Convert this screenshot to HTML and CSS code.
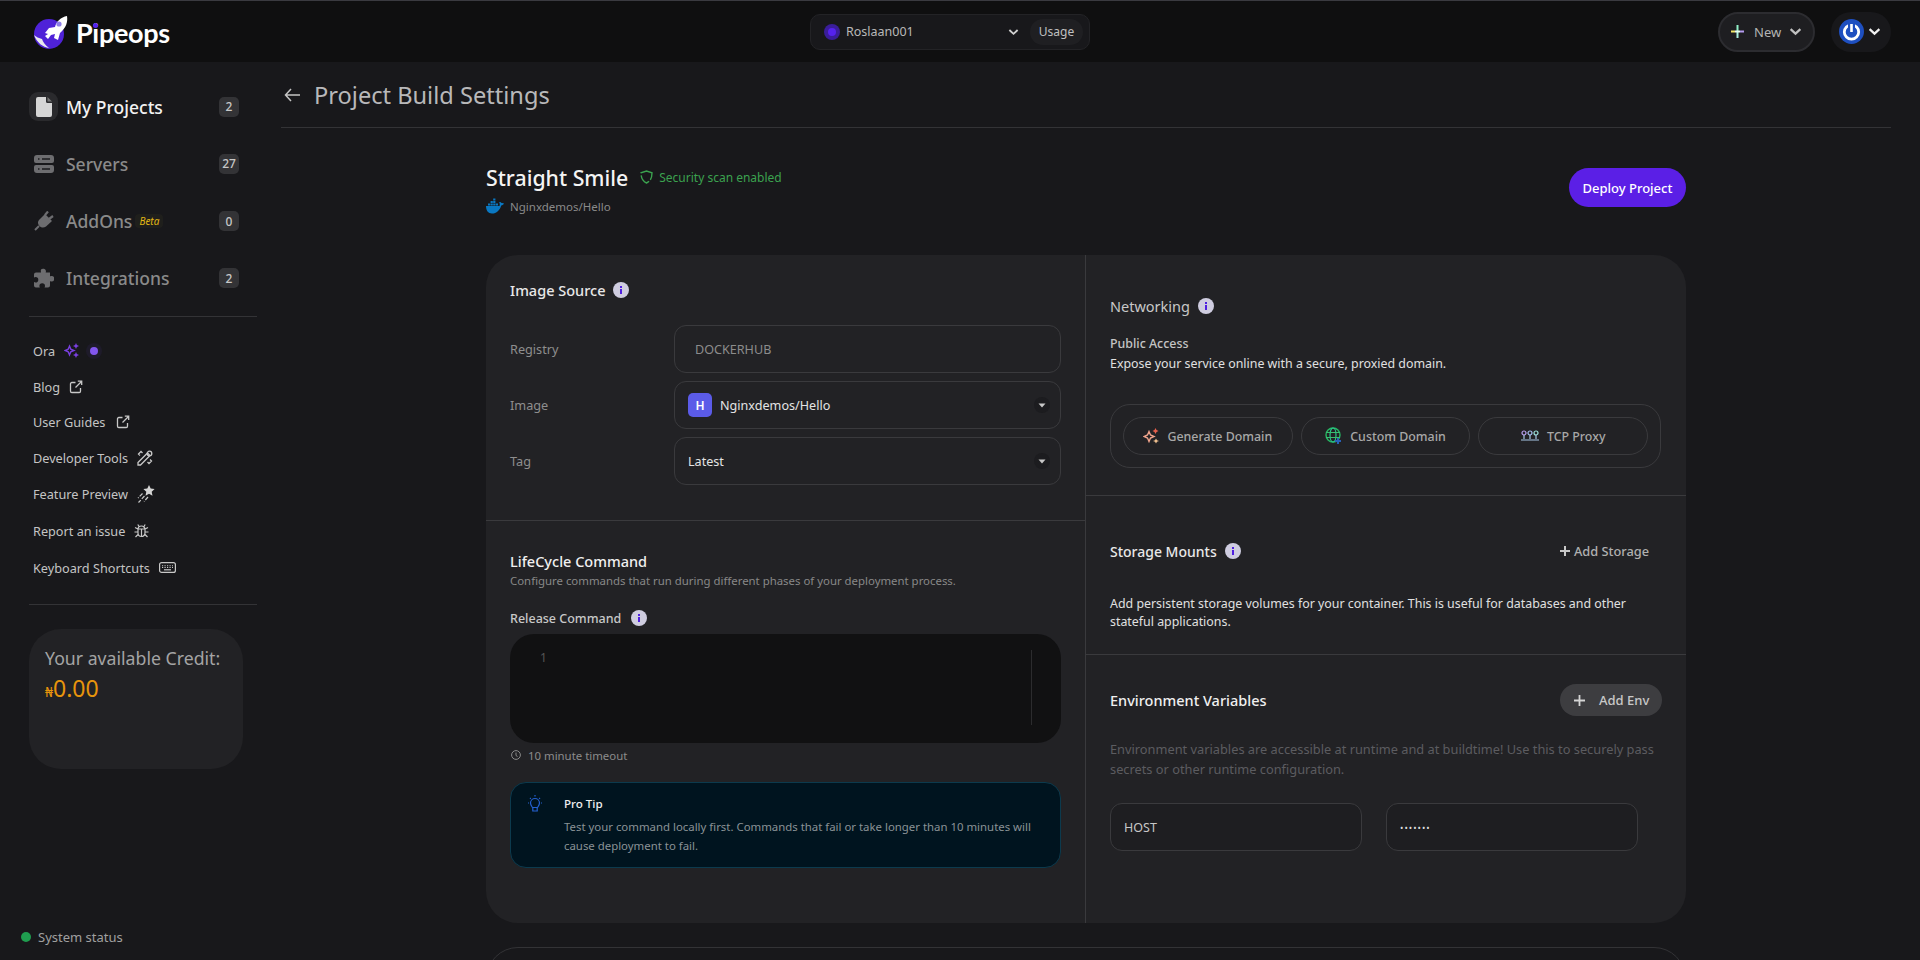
FILE: index.html
```html
<!DOCTYPE html>
<html lang="en">
<head>
<meta charset="utf-8">
<title>Project Build Settings - Pipeops</title>
<link rel="stylesheet" href="styles.css">
</head>
<body>
<svg class="defs" width="0" height="0" aria-hidden="true">
  <symbol id="info" viewBox="0 0 16 16"><circle cx="8" cy="8" r="8" fill="#cfcde0"/><rect x="7" y="7" width="2" height="5" fill="#4f1fe0"/><rect x="7" y="4" width="2" height="2" fill="#4f1fe0"/></symbol>
  <symbol id="ext" viewBox="0 0 14 14"><path d="M6.500 2.500H2.800A1.300 1.300 0 0 0 1.500 3.800v7.400a1.300 1.300 0 0 0 1.300 1.300h7.400a1.300 1.300 0 0 0 1.300-1.300V8M6.500 7.500l6-6M8.800 1.200h3.900v3.900" fill="none" stroke="#c8c8c8" stroke-width="1.300"/></symbol>
  <symbol id="chev" viewBox="0 0 12 8"><path d="M1.500 1.800 6 6l4.500-4.200" fill="none" stroke="currentColor" stroke-width="2"/></symbol>
  <symbol id="caret" viewBox="0 0 8 5"><path d="M.5.500h7L4 4.500z" fill="#c8c8c8"/></symbol>
</svg>

<header class="topbar">
  <a class="brand">
    <svg class="brand-mark" viewBox="0 0 36 34" width="36" height="34">
      <circle cx="16" cy="19" r="15" fill="#4f22d8"/>
      <path d="M1 20c3 8 9 12 15 13-4-3-6-6-7-9-3-1-6-2-8-4z" fill="#e8e8ee"/>
      <path d="M34 1c1 6-1 12-7 17l-2 7-4-2 1-4-4 1-3 4-3-3 3-2-3-1 4-5 6-1C23 7 28 2 34 1z" fill="#fff"/>
      <circle cx="26" cy="9" r="2.600" fill="#8e7ee8"/>
    </svg>
    <span class="brand-name">Pipeops<span class="brand-dot"></span></span>
  </a>
  <div class="org">
    <span class="org-dot"></span>
    <span class="org-name">Roslaan001</span>
    <svg class="org-chev" width="11" height="8"><use href="#chev"/></svg>
    <span class="usage">Usage</span>
  </div>
  <div class="top-actions">
    <button class="new-btn">
      <svg width="13" height="13" viewBox="0 0 13 13"><rect x="0" y="5.500" width="4" height="2" fill="#f2e66a"/><rect x="9" y="5.500" width="4" height="2" fill="#b59cf0"/><rect x="5.500" y="0" width="2" height="6" fill="#8ff0c8"/><rect x="5.500" y="7" width="2" height="6" fill="#a8f0e0"/><rect x="4" y="5.500" width="5" height="2" fill="#e8fff0"/></svg>
      <span>New</span>
      <svg class="new-chev" width="13" height="9"><use href="#chev"/></svg>
    </button>
    <div class="avatar-pill">
      <svg width="25" height="25" viewBox="0 0 25 25"><circle cx="12.500" cy="12.500" r="12.500" fill="#1e4fc0"/><circle cx="12.500" cy="13" r="7.200" fill="none" stroke="#fff" stroke-width="2.800"/><rect x="9" y="3" width="7" height="6" fill="#1e4fc0"/><rect x="11.200" y="5" width="2.600" height="8" fill="#fff"/></svg>
      <svg class="avatar-chev" width="13" height="9"><use href="#chev"/></svg>
    </div>
  </div>
</header>

<div class="shell">
  <aside class="sidebar">
    <nav class="nav">
      <a class="nav-item active">
        <span class="nav-icon boxed"><svg width="16" height="20" viewBox="0 0 16 20"><path d="M2 0h8v4.500A1.500 1.500 0 0 0 11.500 6H16v12a2 2 0 0 1-2 2H2a2 2 0 0 1-2-2V2a2 2 0 0 1 2-2z" fill="#d6d6d6"/><path d="M11.500 0 16 4.500h-4.500z" fill="#777"/></svg></span>
        <span class="nav-label">My Projects</span>
        <span class="count">2</span>
      </a>
      <a class="nav-item">
        <span class="nav-icon"><svg width="20" height="18" viewBox="0 0 20 18"><path d="M3 0h14a3 3 0 0 1 3 3v3a2 2 0 0 1-2 2H2A2 2 0 0 1 0 6V3a3 3 0 0 1 3-3zM2 10h16a2 2 0 0 1 2 2v3a3 3 0 0 1-3 3H3a3 3 0 0 1-3-3v-3a2 2 0 0 1 2-2z" fill="#6d6d70"/><path d="M4 3.200h1.500v1.600H4zM8 3.200h8v1.600H8zM4 13.200h1.500v1.600H4zM8 13.200h8v1.600H8z" fill="#1b1b1e"/></svg></span>
        <span class="nav-label">Servers</span>
        <span class="count">27</span>
      </a>
      <a class="nav-item">
        <span class="nav-icon"><svg width="20" height="20" viewBox="0 0 20 20"><path d="M1 19l4-4" stroke="#6d6d70" stroke-width="2"/><path d="M5 9l6-6 7 7-6 5.500c-2 1.500-4.500 1.500-6.500-.5S3.500 11 5 9z" fill="#6d6d70"/><path d="M11 4l3-3.500M15 8l4-3" stroke="#6d6d70" stroke-width="2.200"/></svg></span>
        <span class="nav-label">AddOns</span>
        <span class="beta">Beta</span>
        <span class="count">0</span>
      </a>
      <a class="nav-item">
        <span class="nav-icon"><svg width="21" height="20" viewBox="0 0 21 20"><path d="M8 1.500a3 3 0 0 1 5 1.500c0 .7-.3 1-.3 1.500H17v4c.6-.4 1-.5 1.500-.5a2.800 2.800 0 0 1 0 5.600c-.5 0-1-.1-1.500-.5v4.400a2 2 0 0 1-2 2h-3.500c.3-.5.5-1 .5-1.500a2.800 2.800 0 0 0-5.600 0c0 .5.2 1 .5 1.500H3a2 2 0 0 1-2-2v-3.500c.5.300 1 .5 1.500.5a2.800 2.800 0 0 0 0-5.600c-.5 0-1 .2-1.500.5V6.500a2 2 0 0 1 2-2h5c0-.5-.5-1.500 0-3z" fill="#6d6d70"/></svg></span>
        <span class="nav-label">Integrations</span>
        <span class="count">2</span>
      </a>
    </nav>
    <ul class="links">
      <li class="link link-ora">Ora
        <svg width="15" height="15" viewBox="0 0 15 15"><path d="M5.500 3 6.800 6.200 10 7.500 6.800 8.800 5.500 12 4.200 8.800 1 7.500 4.200 6.200z" fill="none" stroke="#7a3fe0" stroke-width="1.400"/><path d="M12 0l.9 2.100L15 3l-2.100.9L12 6l-.9-2.100L9 3l2.100-.9zM12 9l.9 2.100 2.100.9-2.100.9L12 15l-.9-2.100L9 12l2.100-.9z" fill="#7a3fe0"/></svg>
        <span class="ora-dot"></span>
      </li>
      <li class="link link-blog">Blog <svg width="14" height="14"><use href="#ext"/></svg></li>
      <li class="link link-guides">User Guides <svg width="14" height="14"><use href="#ext"/></svg></li>
      <li class="link link-dev">Developer Tools
        <svg width="16" height="16" viewBox="0 0 16 16" fill="none" stroke="#c8c8c8" stroke-width="1.300"><path d="M1 12.500 10.500 3l2.500 2.500L3.500 15 1 15zM3 5.500 1.500 4 4 1.500 5.500 3M10.500 12l1.500 1.500L14.500 11 13 9.500"/><circle cx="12.500" cy="3.500" r="2.300"/></svg>
      </li>
      <li class="link link-feat">Feature Preview
        <svg width="18" height="18" viewBox="0 0 18 18"><path d="M12 0l1.700 3.600 3.900.5-2.900 2.700.8 3.900L12 8.800l-3.500 1.900.8-3.900L6.400 4.100l3.900-.5z" fill="#d4d4d4"/><path d="M5.500 8.500 1 13M7.500 11 1.500 17.500M11 12l-4 4.500" fill="none" stroke="#c8c8c8" stroke-width="1.200" stroke-dasharray="4 1.500"/></svg>
      </li>
      <li class="link link-bug">Report an issue
        <svg width="15" height="15" viewBox="0 0 15 15" fill="none" stroke="#c8c8c8" stroke-width="1.200"><path d="M4 6.500a3.500 3.500 0 0 1 7 0V10a3.500 3.500 0 0 1-7 0zM5 3.500 3.800 1.500M10 3.500l1.200-2M4 6 1 4.500M11 6l3-1.500M4 9H.5M11 9h3.500M4 11.500 1.500 14M11 11.500l2.500 2.500M7.500 6.500v7.500M4.500 6h6"/></svg>
      </li>
      <li class="link link-keys">Keyboard Shortcuts
        <svg width="17" height="11" viewBox="0 0 17 11" fill="none" stroke="#c8c8c8"><rect x=".6" y=".6" width="15.800" height="9.800" rx="2" stroke-width="1.200"/><path d="M3 3.700h11M3 5.500h11" stroke-width="1.100" stroke-dasharray="1.200 1.300"/><path d="M5 7.800h7" stroke-width="1.200"/></svg>
      </li>
    </ul>
    <div class="credit">
      <p class="credit-label">Your available Credit:</p>
      <p class="credit-value"><span class="naira">₦</span>0.00</p>
    </div>
    <div class="status"><span class="status-dot"></span>System status</div>
  </aside>

  <main class="main">
    <div class="page-head">
      <svg width="16" height="14" viewBox="0 0 16 14"><path d="M7 1 1.500 7 7 13M2 7h14" fill="none" stroke="#c4c4c4" stroke-width="1.500"/></svg>
      <h1>Project Build Settings</h1>
    </div>

    <div class="content">
      <div class="project-head">
        <div>
          <div class="project-title">
            <h2>Straight Smile</h2>
            <svg width="13" height="14" viewBox="0 0 13 14"><path d="M6.500 1 12 2.800c0 5-1.500 8.300-5.500 10.200C2.500 11.100 1 7.800 1 2.800z" fill="none" stroke="#3ba24f" stroke-width="1.400" stroke-dasharray="13 2"/></svg>
            <span class="scan">Security scan enabled</span>
          </div>
          <div class="project-source">
            <svg width="18" height="16" viewBox="0 0 18 16"><path d="M0 8h13.500c.5-1.500.3-2.800-.4-3.800 1-.6 1.800-.2 2.400.8 1-.2 2 0 2.500.6-.5 1.200-1.500 1.800-2.800 1.800C14 12 10.500 15.500 6 15.500 2 15.500 0 12.500 0 8z" fill="#0a78c2"/><path d="M2 5.500h2.200v2H2zM4.600 5.500h2.200v2H4.600zM7.200 5.500h2.200v2H7.200zM9.800 5.500H12v2H9.800zM4.600 3h2.200v2H4.600zM7.200 3h2.200v2H7.200zM7.200.5h2.200v2H7.200z" fill="#0a78c2"/></svg>
            <span>Nginxdemos/Hello</span>
          </div>
        </div>
        <button class="deploy">Deploy Project</button>
      </div>

      <section class="card">
        <div class="col col-left">
          <div class="sec sec-source">
            <h3 class="sec-title">Image Source <svg width="16" height="16"><use href="#info"/></svg></h3>
            <div class="form-row">
              <span class="form-label">Registry</span>
              <div class="field field-muted">DOCKERHUB</div>
            </div>
            <div class="form-row">
              <span class="form-label">Image</span>
              <div class="field field-select"><span class="img-badge">H</span>Nginxdemos/Hello<span class="caret-wrap"><svg width="8" height="5"><use href="#caret"/></svg></span></div>
            </div>
            <div class="form-row">
              <span class="form-label">Tag</span>
              <div class="field field-select">Latest<span class="caret-wrap"><svg width="8" height="5"><use href="#caret"/></svg></span></div>
            </div>
          </div>
          <div class="sec sec-life">
            <h3 class="sec-title sec-title-plain">LifeCycle Command</h3>
            <p class="sec-sub">Configure commands that run during different phases of your deployment process.</p>
            <h4 class="release">Release Command <svg width="16" height="16"><use href="#info"/></svg></h4>
            <div class="editor"><span class="line-no">1</span><span class="scroll-line"></span></div>
            <div class="timeout">
              <svg width="10" height="10" viewBox="0 0 10 10" fill="none" stroke="#8a8a8a"><circle cx="5" cy="5" r="4.400"/><path d="M5 2.500V5.500L6.500 6.500"/></svg>
              10 minute timeout
            </div>
            <div class="tip">
              <svg class="tip-icon" width="16" height="18" viewBox="0 0 16 18" fill="none" stroke="#2460d0" stroke-width="1.200"><path d="M5.500 12.500C4.500 11 3.500 10 3.500 8a4.500 4.500 0 0 1 9 0c0 2-1 3-2 4.500zM5.800 12.500v3.500h4.400v-3.500M8 0v1.500M1 8h1M14 8h1M3 3l.8.800M13 3l-.8.800"/></svg>
              <div>
                <p class="tip-title">Pro Tip</p>
                <p class="tip-text">Test your command locally first. Commands that fail or take longer than 10 minutes will cause deployment to fail.</p>
              </div>
            </div>
          </div>
        </div>

        <div class="col col-right">
          <div class="sec sec-net">
            <h3 class="sec-title sec-title-dim">Networking <svg width="16" height="16"><use href="#info"/></svg></h3>
            <p class="pub-title">Public Access</p>
            <p class="pub-text">Expose your service online with a secure, proxied domain.</p>
            <div class="domain-box">
              <button class="domain-btn">
                <svg width="16" height="16" viewBox="0 0 16 16"><path d="M6 3.500 7.500 7 11 8.500 7.500 10 6 13.500 4.500 10 1 8.500 4.500 7z" fill="none" stroke="#f0a48c" stroke-width="1.400"/><path d="M12.500 0l1 2 2 1-2 1-1 2-1-2-2-1 2-1z" fill="#e8604c"/><path d="M13 10.500l1 1.800 2 .7-2 .7-1 1.800-1-1.800-2-.7 2-.7z" fill="#f0c090"/></svg>
                Generate Domain
              </button>
              <button class="domain-btn">
                <svg width="17" height="18" viewBox="0 0 17 18"><circle cx="8" cy="8" r="7" fill="none" stroke="#26b864" stroke-width="1.400"/><ellipse cx="8" cy="8" rx="3" ry="7" fill="none" stroke="#2ac48c" stroke-width="1.200"/><path d="M1 5.500h14M1 10.500h14" stroke="#38c070" stroke-width="1.200"/><path d="M10 14h6M13 11v6" stroke="#2860b8" stroke-width="2"/></svg>
                Custom Domain
              </button>
              <button class="domain-btn">
                <svg width="18" height="12" viewBox="0 0 18 12" fill="none" stroke-width="1.200"><circle cx="3" cy="3" r="2" stroke="#b9a0f0"/><circle cx="9" cy="3" r="2" stroke="#a8c0f0"/><circle cx="15" cy="3" r="2" stroke="#9ae0d8"/><path d="M3 5v4M9 5v4M15 5v4M0 10h18" stroke="#a8c8e8"/></svg>
                TCP Proxy
              </button>
            </div>
          </div>
          <div class="sec sec-storage">
            <div class="sec-head">
              <h3 class="sec-title">Storage Mounts <svg width="16" height="16"><use href="#info"/></svg></h3>
              <button class="add-storage"><svg width="10" height="10" viewBox="0 0 10 10"><path d="M5 0v10M0 5h10" stroke="#c8c8c8" stroke-width="2"/></svg>Add Storage</button>
            </div>
            <p class="storage-text">Add persistent storage volumes for your container. This is useful for databases and other stateful applications.</p>
          </div>
          <div class="sec sec-env">
            <div class="sec-head">
              <h3 class="sec-title sec-title-plain">Environment Variables</h3>
              <button class="add-env"><svg width="11" height="11" viewBox="0 0 11 11"><path d="M5.500 0v11M0 5.500h11" stroke="#d4d4d4" stroke-width="1.800"/></svg>Add Env</button>
            </div>
            <p class="env-text">Environment variables are accessible at runtime and at buildtime! Use this to securely pass secrets or other runtime configuration.</p>
            <div class="env-row">
              <div class="env-input">HOST</div>
              <div class="env-input env-secret">•••••••</div>
            </div>
          </div>
        </div>
      </section>

      <section class="card-next"></section>
    </div>
  </main>
</div>
</body>
</html>
```
FILE: styles.css
```css
* { box-sizing: border-box; }
html, body { margin: 0; height: 960px; overflow: hidden; }
body {
  background: #18181b;
  color: #c8c8c8;
  font-family: "Noto Sans", "Open Sans", sans-serif;
  font-size: 13px;
  display: flex;
  flex-direction: column;
}
h1, h2, h3, h4, p, ul { margin: 0; padding: 0; }
button { font: inherit; color: inherit; background: none; border: 0; padding: 0; }
.defs { position: absolute; }

/* top bar */
.topbar {
  height: 62px;
  flex: none;
  background: #0f0f10;
  border-top: 1px solid #3a3a40;
  display: grid;
  grid-template-columns: 777px 280px 1fr;
  align-items: center;
  padding: 0 29px 0 33px;
}
.brand { display: flex; align-items: center; gap: 7px; }
.brand-mark { flex: none; }
.brand-name { position: relative; font-family: Lato, sans-serif; font-size: 27px; line-height: 32px; font-weight: 700; color: #fff; letter-spacing: -.3px; padding-top: 3px; }
.brand-dot { position: absolute; left: 17px; top: 9px; width: 5px; height: 5px; border-radius: 50%; background: #5522ee; }
.org {
  height: 36px;
  background: #18181b;
  border: 1px solid #232326;
  border-radius: 10px;
  display: flex;
  align-items: center;
  padding: 0 6px 0 13px;
  color: #b8b8b8;
  font-size: 12.500px;
}
.org-dot { width: 16px; height: 16px; border-radius: 50%; background: #3a1d9a; display: flex; align-items: center; justify-content: center; margin-right: 6px; }
.org-dot::after { content: ""; width: 8px; height: 8px; border-radius: 50%; background: #5522ee; }
.org-name { flex: 1; }
.org-chev { color: #d0d0d0; margin-right: 11px; }
.usage { height: 26px; width: 53px; border-radius: 13px; background: #1f1f22; display: flex; align-items: center; justify-content: center; color: #c0c0c0; font-size: 12px; }
.top-actions { display: flex; justify-content: flex-end; gap: 16px; align-items: center; }
.new-btn {
  width: 97px; height: 40px; border-radius: 20px;
  background: #1e1e21; border: 2px solid #2c2c30;
  display: flex; align-items: center; padding: 0 11px 0 11px; color: #b4b4b4; font-size: 13px;
}
.new-btn span { margin: 0 auto 0 10px; }
.new-chev { color: #c0c0c0; }
.avatar-pill {
  width: 60px; height: 40px; border-radius: 20px; background: #18181b;
  display: flex; align-items: center; gap: 4px; padding-left: 8px;
}
.avatar-chev { color: #f0f0f0; }

/* shell */
.shell { flex: 1; display: flex; min-height: 0; }
.sidebar { width: 281px; flex: none; padding: 30px 24px 14px 29px; display: flex; flex-direction: column; }
.nav { padding-bottom: 23px; border-bottom: 1px solid #333336; }
.nav-item { height: 29px; display: flex; align-items: center; margin-bottom: 28.330px; color: #8a8a8a; font-size: 17.500px; font-weight: 500; padding-right: 18px; }
.nav-item:last-child { margin-bottom: 0; }
.nav-item.active { color: #f2f2f2; }
.nav-icon { width: 29px; height: 29px; margin-right: 8px; display: flex; align-items: center; justify-content: center; flex: none; }
.nav-icon.boxed { background: #2a2a2d; border-radius: 9px; }
.nav-label { margin-right: 3px; }
.beta { font-size: 10px; font-style: italic; color: #e2b714; background: #1f1f1c; border-radius: 4px; padding: 0 4px; line-height: 14px; font-weight: 400; }
.count { margin-left: auto; width: 20px; height: 20px; border-radius: 5px; background: #333336; color: #c8c8c8; font-size: 12px; display: flex; align-items: center; justify-content: center; font-weight: 500; }

.links { list-style: none; padding: 24px 4px 0; height: 288px; border-bottom: 1px solid #333336; }
.link { display: flex; align-items: center; gap: 9px; height: 20px; color: #c4c4c4; font-size: 12.700px; }
.link-blog { margin-top: 16px; }
.link-guides { margin-top: 15px; gap: 11px; }
.link-dev { margin-top: 16px; }
.link-feat { margin-top: 16px; }
.link-bug { margin-top: 17px; }
.link-keys { margin-top: 17px; }
.ora-dot { width: 8px; height: 8px; border-radius: 50%; background: #8256ee; box-shadow: 0 0 0 4px #1e1b2a; margin-left: 2px; }
.credit { height: 140px; margin-top: 24px; width: 214px; background: #222225; border-radius: 32px; padding: 16px; }
.credit-label { font-size: 17.700px; color: #a4a4a4; line-height: 26px; }
.credit-value { font-size: 23px; color: #e8950c; line-height: 30px; margin-top: 2px; }
.naira { font-size: 14px; }
.status { margin-top: auto; display: flex; align-items: center; gap: 7px; margin-left: -8px; color: #a0a0a0; line-height: 18px; }
.status-dot { width: 10px; height: 10px; border-radius: 50%; background: #1f9d4f; }

/* main */
.main { flex: 1; padding-right: 29px; min-width: 0; }
.page-head { height: 66px; display: flex; align-items: center; gap: 14px; padding-left: 3px; border-bottom: 1px solid #333336; }
.page-head h1 { font-size: 23.600px; font-weight: 400; color: #b8b8ba; }
.content { width: 1200px; margin: 0 auto; }
.project-head { height: 127px; padding-top: 34px; display: flex; justify-content: space-between; align-items: flex-start; }
.project-title { display: flex; align-items: center; gap: 6px; height: 30px; }
.project-title h2 { font-size: 21.300px; font-weight: 500; color: #f4f4f4; margin-right: 6px; }
.scan { color: #3ba24f; font-size: 12px; }
.project-source { display: flex; align-items: center; gap: 6px; margin-top: 6px; color: #8a8a8a; font-size: 11.500px; }
.deploy { width: 117px; height: 39px; margin-top: 6px; border-radius: 20px; background: #5b1fe6; color: #fff; font-size: 13px; font-weight: 500; }

.card { height: 668px; background: #222225; border-radius: 32px; display: grid; grid-template-columns: 599px 601px; }
.col { display: flex; flex-direction: column; min-width: 0; }
.col-right { border-left: 1px solid #3a3a3d; }
.sec { padding-left: 24px; }
.sec-source { height: 266px; padding: 24px 24px 0 24px; border-bottom: 1px solid #3a3a3d; }
.sec-title { display: flex; align-items: center; gap: 8px; font-size: 14.500px; font-weight: 500; color: #e8e8e8; height: 22px; }
.sec-title-dim { color: #c8c8c8; font-weight: 400; }
.sec-title-plain { color: #f0f0f0; }
.sec-storage .sec-title { font-size: 14px; }
.form-row { display: grid; grid-template-columns: 164px 1fr; align-items: center; margin-top: 8px; }
.sec-source .sec-title + .form-row { margin-top: 24px; }
.form-label { color: #8e8e8e; font-size: 12.700px; }
.field { height: 48px; border: 1px solid #3a3a3d; border-radius: 12px; display: flex; align-items: center; padding: 0 13px; color: #e4e4e4; font-size: 12.600px; }
.field-muted { color: #8c8c8c; padding-left: 20px; }
.img-badge { width: 24px; height: 24px; border-radius: 5px; background: #5b5be8; color: #fff; font-weight: 600; font-size: 12px; display: flex; align-items: center; justify-content: center; margin-right: 8px; }
.caret-wrap { margin-left: auto; width: 16px; height: 16px; border-radius: 50%; background: #1c1c1f; display: flex; align-items: center; justify-content: center; margin-right: -3px; }

.sec-life { padding: 29px 24px 0 24px; }
.sec-sub { color: #888; font-size: 11.400px; line-height: 18px; }
.release { display: flex; align-items: center; gap: 10px; margin-top: 18px; color: #c8c8c8; font-size: 12.500px; font-weight: 500; height: 20px; }
.editor { height: 109px; margin-top: 6px; background: #111112; border-radius: 24px; display: flex; padding: 16px 29px 18px 30px; justify-content: space-between; color: #555; font-size: 12px; }
.line-no { line-height: 16px; }
.scroll-line { width: 1px; background: #2c2c2e; }
.timeout { display: flex; align-items: center; gap: 7px; margin-top: 3px; color: #8c8c8c; font-size: 11.400px; padding-left: 1px; height: 18px; }
.tip { height: 86px; margin-top: 18px; background: #00141f; border: 1px solid #0c3a4d; border-radius: 16px; padding: 12px 16px 0; display: flex; gap: 21px; }
.tip-icon { flex: none; }
.tip-title { color: #f0f0f0; font-size: 11.600px; font-weight: 500; line-height: 18px; }
.tip-text { color: #8a9296; font-size: 11.400px; line-height: 19px; margin-top: 4px; }

.sec-net { height: 241px; padding: 40px 20px 0 24px; border-bottom: 1px solid #3a3a3d; }
.pub-title { color: #c4c4c4; font-size: 12.400px; line-height: 20px; margin-top: 17px; font-weight: 500; }
.pub-text { color: #e0e0e0; font-size: 12.400px; line-height: 20px; }
.domain-box { width: 551px; height: 64px; margin-top: 30px; border: 1px solid #3a3a3d; border-radius: 20px; display: flex; align-items: center; gap: 8px; padding: 0 12px; }
.domain-btn { width: 170px; height: 38px; border: 1px solid #3a3a3d; border-radius: 19px; display: flex; align-items: center; justify-content: center; gap: 8px; color: #a8a8a8; font-size: 12.400px; font-weight: 500; }
.sec-storage { height: 159px; padding: 44px 37px 0 24px; border-bottom: 1px solid #3a3a3d; }
.sec-head { display: flex; align-items: center; justify-content: space-between; }
.add-storage { display: flex; align-items: center; gap: 4px; color: #b0b0b0; font-size: 12.800px; font-weight: 500; }
.storage-text { margin-top: 33px; font-size: 12.400px; line-height: 17.500px; color: #e0e0e0; width: 540px; }
.sec-env { padding: 29px 24px 0 24px; }
.add-env { width: 102px; height: 32px; background: #3d3d40; border-radius: 16px; display: flex; align-items: center; gap: 14px; padding-left: 14px; color: #c8c8c8; font-size: 13px; font-weight: 500; }
.env-text { margin-top: 23px; color: #5c5c60; font-size: 12.800px; line-height: 20px; width: 545px; }
.env-row { display: flex; gap: 24px; margin-top: 24px; }
.env-input { width: 252px; height: 48px; border: 1px solid #3a3a3d; border-radius: 12px; display: flex; align-items: center; padding: 0 13px; color: #c8c8c8; font-size: 12.500px; background: #1e1e21; }
.env-secret { font-size: 9px; letter-spacing: 1px; color: #dcdcdc; }
.card-next { height: 200px; margin-top: 24px; border: 1px solid #333336; border-radius: 32px; }
```
